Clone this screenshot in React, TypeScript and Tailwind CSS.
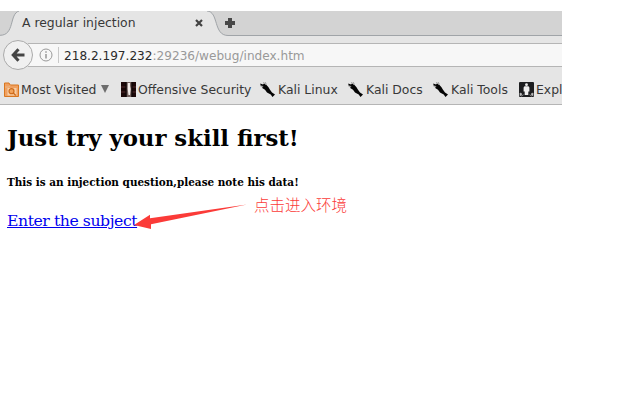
import type { ReactNode } from "react";

function FolderIcon() {
  return (
    <svg className="h-[15px] w-[15px] shrink-0" viewBox="0 0 15 15">
      <path d="M.5 14.500V1h4.500l1.200 2H14.500v11.500z" fill="#f0a060" stroke="#d9771f" />
      <path d="M1 5h4l1-1.500" fill="none" stroke="#e9b88a" />
      <path d="M3.500 6h9v7.500h-9z" fill="#f7cfa6" />
      <circle cx="7.500" cy="9.200" r="2.500" fill="#f3a45c" stroke="#cf6c1c" strokeWidth="1.200" />
      <path d="M9.300 11l2.500 2.500" stroke="#cf6c1c" strokeWidth="1.300" />
    </svg>
  );
}

function OffsecIcon() {
  return (
    <svg className="h-[15px] w-[15px] shrink-0" viewBox="0 0 15 15">
      <path d="M0 0h15v15H0z" fill="#1c0808" />
      <path d="M0 5h5M0 10h5M11 5h4M11 10h4" stroke="#512a2c" />
      <path d="M5.500 0h5v15h-5z" fill="#75625f" />
      <path d="M6.800 1h2.200v3l.7 3-.7 6H7.500l-.8-6z" fill="#f1ebe8" />
      <path d="M5 0v15M11 0v15" stroke="#080404" />
    </svg>
  );
}

function KaliIcon() {
  return (
    <svg className="-ml-px mr-px h-[15px] w-[15px] shrink-0" viewBox="0 0 15 15">
      <path d="M.3 1.500L3 2.500 4 1.500 6.500 3l2 2.200L10 7.800l2 2.700 3 2-2.500 2.500-1.800-2.500-3.700-2L5 7.800 1.800 5.800 3.200 5 .5 3.500z" fill="#050505" />
      <path d="M3 .4l3 2M5 0l1.500 2.500M.2 3.800l3 .7" stroke="#999" strokeWidth=".9" />
    </svg>
  );
}

function ExploitIcon() {
  return (
    <svg className="h-[15px] w-[15px] shrink-0" viewBox="0 0 15 15">
      <rect width="15" height="15" rx="1" fill="#1d1e20" />
      <circle cx="7.500" cy="2.700" r="1.400" fill="#eee" />
      <path d="M5.500 4.200h4l.9 1.200v4H9.300V13H5.700V9.400H4.600v-4z" fill="#eee" />
      <path d="M1 11l2 1-2 1.800zM14 11l-2 1 2 1.800zM2 14.200l2.500-1.500M13 14.200l-2.500-1.500" fill="#bbb" stroke="#bbb" strokeWidth=".7" />
    </svg>
  );
}

function Bookmark({ icon, label, width }: { icon: ReactNode; label: string; width: string }) {
  return (
    <div className={`flex shrink-0 items-center gap-[2px] ${width}`}>
      {icon}
      <span className="pt-[2px] whitespace-nowrap">{label}</span>
    </div>
  );
}

function TabStrip() {
  return (
    <div className="relative h-[25px] bg-[#d3d3d3]">
      <svg className="absolute inset-0" width="562" height="25" viewBox="0 0 562 25">
        <path d="M0 24.500C15 24.500 9 3 19 0H207C219 .5 213 24.500 228 24.500V25H0z" fill="#e5e5e5" />
        <path d="M0 24.300C15 24.300 9 3 19 0M207 0C219 .5 213 24.500 228 24.500H562" fill="none" stroke="#a0a4a8" />
      </svg>
      <div className="relative flex h-[23px] items-center pl-[22px]">
        <span className="w-[173px] pt-px text-[12.400px]">A regular injection</span>
        <svg width="8" height="8" viewBox="0 0 8 8">
          <path d="M1 1l6 6M7 1l-6 6" stroke="#424242" strokeWidth="2.200" />
        </svg>
        <svg className="ml-[22px]" width="10" height="10" viewBox="0 0 10 10">
          <path d="M5 0v10M0 5h10" stroke="#484848" strokeWidth="4" />
        </svg>
      </div>
    </div>
  );
}

function AddressRow() {
  return (
    <div className="flex h-[38px] items-center">
      <div className="z-10 ml-[3px] flex h-[30px] w-[30px] shrink-0 items-center justify-center rounded-full border border-[#aaa] bg-[#f0f0f0]">
        <svg width="14" height="14" viewBox="0 0 14 14">
          <path d="M7.500 1.200L2.200 7l5.300 5.800M3 7h10.500" fill="none" stroke="#444" strokeWidth="3" />
        </svg>
      </div>
      <div className="-ml-[5px] flex h-[24px] flex-1 items-center border-y border-[#b5b5b5] bg-[#f7f7f7] pl-[11px]">
        <svg width="14" height="14" viewBox="0 0 14 14">
          <circle cx="7" cy="7" r="6" fill="none" stroke="#999" />
          <path d="M7 6v4.500M7 3.200v1.500" stroke="#888" strokeWidth="1.300" />
        </svg>
        <div className="ml-[5px] h-4 w-px bg-[#c8c8c8]" />
        <span className="ml-[5px] pt-[2px] text-[12.100px] whitespace-nowrap text-[#999]">
          <span className="text-[#2b2b2b]">218.2.197.232</span>:29236/webug/index.htm
        </span>
      </div>
    </div>
  );
}

function BookmarksBar() {
  return (
    <div className="flex h-[31px] items-center border-b border-[#b5b5b5] pt-px pl-[4px] text-[12.400px]">
      <div className="flex w-[117px] shrink-0 items-center gap-[2px]">
        <FolderIcon />
        <span className="w-[78px] pt-[2px] whitespace-nowrap">Most Visited</span>
        <svg width="8" height="8" viewBox="0 0 8 8">
          <path d="M0 0h8L4 8z" fill="#6d6d6d" />
        </svg>
      </div>
      <Bookmark icon={<OffsecIcon />} label="Offensive Security" width="w-[140px]" />
      <Bookmark icon={<KaliIcon />} label="Kali Linux" width="w-[88px]" />
      <Bookmark icon={<KaliIcon />} label="Kali Docs" width="w-[85px]" />
      <Bookmark icon={<KaliIcon />} label="Kali Tools" width="w-[85px]" />
      <Bookmark icon={<ExploitIcon />} label="Expl" width="w-[43px]" />
    </div>
  );
}

export default function App() {
  return (
    <div className="h-[403px] w-[630px] overflow-hidden bg-white pt-[11px]">
      <header className="w-[562px] bg-[#e5e5e5] font-['DejaVu_Sans',sans-serif] text-[#383838]">
        <TabStrip />
        <AddressRow />
        <BookmarksBar />
      </header>
      <main className="relative pl-[7px] font-['DejaVu_Serif',serif] text-black">
        <h1 className="pt-[17px] text-[22.800px] leading-[32px] font-bold">Just try your skill first!</h1>
        <h5 className="mt-[21px] text-[10.450px] leading-[14px] font-bold">This is an injection question,please note his data!</h5>
        <a href="#" className="mt-[22px] inline-block text-[15.700px] leading-[20px] tracking-[-0.450px] text-[#0000ee] underline">Enter the subject</a>
        <svg className="absolute top-[98px] left-[134px]" width="114" height="28" viewBox="0 0 114 28">
          <path d="M0 22L16 11.800V15.300L113 1.500 17 21.300V26z" fill="#fb3b38" />
        </svg>
        <span className="absolute top-[88px] left-[254px] font-['Noto_Sans_CJK_SC',sans-serif] text-[15.500px] leading-[22px] font-light whitespace-nowrap text-[#fb3b38]">点击进入环境</span>
      </main>
    </div>
  );
}
